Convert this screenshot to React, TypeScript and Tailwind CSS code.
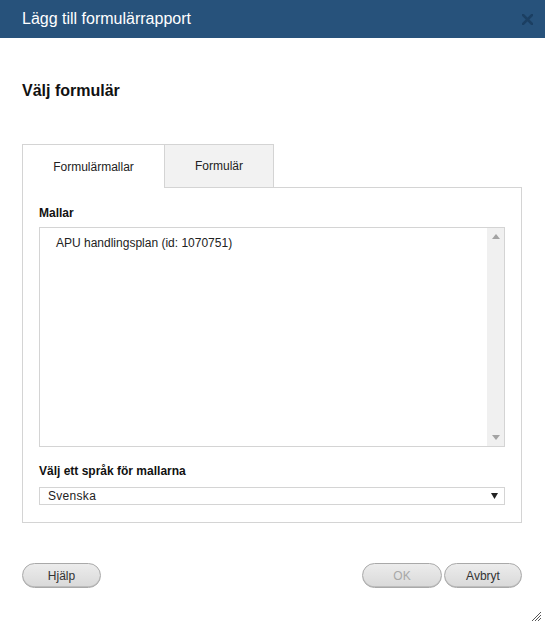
import React from "react";

export default function App() {
  const btn =
    "h-[25px] rounded-full border border-[#a9a9a9] bg-gradient-to-b from-[#ececec] to-[#d9d9d9] shadow-[inset_0_-1px_0_#bdbdbd] text-[12px] leading-none flex items-center justify-center";
  return (
    <div
      className="w-[545px] h-[625px] bg-white flex flex-col text-[#222] relative overflow-hidden"
      style={{ fontFamily: '"Liberation Sans", Arial, sans-serif' }}
    >
      <div className="h-[38px] shrink-0 bg-[#27527b] flex items-center justify-between pl-[22px] pr-[12px]">
        <span className="text-white text-[16px] leading-none">Lägg till formulärrapport</span>
        <svg width="11" height="11" viewBox="0 0 11 11" className="mt-[1px]">
          <path d="M1 1 L10 10 M10 1 L1 10" stroke="#1b3f62" strokeWidth="2.6" strokeLinecap="square" />
        </svg>
      </div>

      <div className="px-[22px] flex flex-col">
        <h2 className="mt-[44px] text-[16px] leading-[18px] font-bold text-[#111]">Välj formulär</h2>

        <div className="mt-[44px] flex h-[44px] w-[500px]">
          <div className="w-[142px] border-l border-t border-[#d4d4d4] bg-white flex items-center justify-center text-[12px] text-[#222]">
            Formulärmallar
          </div>
          <div className="w-[110px] border border-[#d4d4d4] bg-[#f2f2f2] flex items-center justify-center text-[12px] text-[#222]">
            Formulär
          </div>
          <div className="flex-1 border-b border-[#d4d4d4]" />
        </div>

        <div className="w-[500px] border-l border-r border-b border-[#d4d4d4] px-[16px] pt-[18px] pb-[17px] flex flex-col">
          <div className="text-[12px] leading-[14px] font-bold text-[#111]">Mallar</div>
          <div className="mt-[7px] h-[220px] border border-[#d4d4d4] flex">
            <div className="flex-1 pl-[16px] pt-[8px] text-[12px] leading-[14px] text-[#222]">
              APU handlingsplan (id: 1070751)
            </div>
            <div className="w-[17px] bg-[#f0f0f0] flex flex-col items-center justify-between py-[6px]">
              <svg width="8" height="5" viewBox="0 0 8 5">
                <path d="M0 5 L4 0 L8 5 Z" fill="#a3a3a3" />
              </svg>
              <svg width="8" height="5" viewBox="0 0 8 5">
                <path d="M0 0 L4 5 L8 0 Z" fill="#a3a3a3" />
              </svg>
            </div>
          </div>
          <div className="mt-[17px] text-[12px] leading-[14px] font-bold text-[#111]">Välj ett språk för mallarna</div>
          <div className="mt-[9px] h-[18px] border border-[#d4d4d4] flex items-center justify-between pl-[8px] pr-[6px] text-[12px] text-[#222]">
            <span className="tracking-[0.3px]">Svenska</span>
            <svg width="7" height="6" viewBox="0 0 7 6">
              <path d="M0 0 L7 0 L3.5 6 Z" fill="#222" />
            </svg>
          </div>
        </div>

        <div className="mt-[40px] flex items-center justify-between w-[500px]">
          <div className={btn + " w-[79px] text-[#333]"}>Hjälp</div>
          <div className="flex gap-[2px]">
            <div className={btn + " w-[80px] text-[#a8a8a8]"}>OK</div>
            <div className={btn + " w-[78px] text-[#333]"}>Avbryt</div>
          </div>
        </div>
      </div>

      <svg width="11" height="11" viewBox="0 0 11 11" className="absolute right-[3px] bottom-[3px]">
        <path d="M1 10 L10 1 M4 10 L10 4 M7 10 L10 7" stroke="#444" strokeWidth="0.9" />
      </svg>
    </div>
  );
}
